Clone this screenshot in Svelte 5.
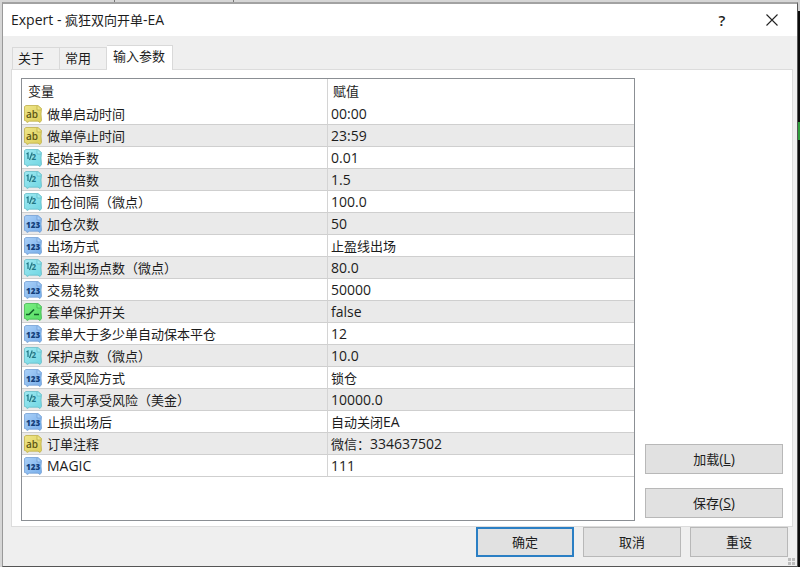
<script lang="ts">
  type Kind = "text" | "double" | "int" | "bool";

  const title = "Expert - 疯狂双向开单-EA";
  const tabs = ["关于", "常用", "输入参数"];
  let activeTab = $state(2);

  const params: { kind: Kind; name: string; value: string }[] = [
    { kind: "text", name: "做单启动时间", value: "00:00" },
    { kind: "text", name: "做单停止时间", value: "23:59" },
    { kind: "double", name: "起始手数", value: "0.01" },
    { kind: "double", name: "加仓倍数", value: "1.5" },
    { kind: "double", name: "加仓间隔（微点）", value: "100.0" },
    { kind: "int", name: "加仓次数", value: "50" },
    { kind: "int", name: "出场方式", value: "止盈线出场" },
    { kind: "double", name: "盈利出场点数（微点）", value: "80.0" },
    { kind: "int", name: "交易轮数", value: "50000" },
    { kind: "bool", name: "套单保护开关", value: "false" },
    { kind: "int", name: "套单大于多少单自动保本平仓", value: "12" },
    { kind: "double", name: "保护点数（微点）", value: "10.0" },
    { kind: "int", name: "承受风险方式", value: "锁仓" },
    { kind: "double", name: "最大可承受风险（美金）", value: "10000.0" },
    { kind: "int", name: "止损出场后", value: "自动关闭EA" },
    { kind: "text", name: "订单注释", value: "微信：334637502" },
    { kind: "int", name: "MAGIC", value: "111" },
  ];

  const colors = {
    text: { light: "#efe68a", dark: "#dccd58", edge: "#bfb04a", ink: "#5d5514" },
    double: { light: "#9fe9f2", dark: "#70d6e2", edge: "#66bcc8", ink: "#1f7584" },
    int: { light: "#a9d0f8", dark: "#78aeea", edge: "#749fd4", ink: "#143f7a" },
    bool: { light: "#7bf083", dark: "#55dc64", edge: "#44b552", ink: "#14622a" },
  };

  // latin runs are set a little larger than the chinese ones
  function runs(text: string) {
    return text.split(/([\x20-\x7e]+)/).filter((s) => s);
  }
</script>

{#snippet mixed(text: string)}
  {#each runs(text) as run}<span class:latin={/^[\x20-\x7e]/.test(run)}>{run}</span>{/each}
{/snippet}

{#snippet icon(kind: Kind)}
  {@const c = colors[kind]}
  <svg class="icon" viewBox="0 0 18 18" aria-hidden="true">
    <defs>
      <linearGradient id="fill-{kind}" x1="0" y1="0" x2="1" y2="1">
        <stop offset="0" stop-color={c.light} />
        <stop offset="1" stop-color={c.dark} />
      </linearGradient>
    </defs>
    <path
      d="M.5 1.500L2 .5H14L17.500 3.500L17 9L17.500 15.500L16 17.500L14 16.200H5.500L3 17.500L2.500 16L.5 15.500Z"
      fill="url(#fill-{kind})"
      stroke={c.edge}
      stroke-width=".8"
    />
    <path d="M13 1V5H17" fill={c.light} stroke={c.edge} stroke-width=".8" />
    {#if kind === "text"}
      <text x="2" y="12.500" font-size="10" font-weight="600" fill={c.ink}>ab</text>
    {:else if kind === "double"}
      <path d="M2.500 5L4 4V10M8.200 3.500L5.500 11" fill="none" stroke={c.ink} stroke-width="1.200" />
      <text x="7.500" y="11" font-size="8" font-weight="700" fill={c.ink}>2</text>
    {:else if kind === "int"}
      <text x="2" y="12.500" font-size="8" font-weight="800" fill={c.ink}>123</text>
    {:else}
      <path d="M2 11.500H5L10 6.500M10 11.500H15" fill="none" stroke={c.ink} stroke-width="1.700" />
    {/if}
  </svg>
{/snippet}

<div class="desktop">
  <div class="dialog" role="dialog" aria-labelledby="title">
    <header>
      <h1 id="title">{@render mixed(title)}</h1>
      <button class="caption help" aria-label="帮助">?</button>
      <button class="caption" aria-label="关闭">
        <svg viewBox="0 0 12 12" aria-hidden="true">
          <path d="M.5.500L11.500 11.500M11.500.5L.5 11.500" stroke="#222" stroke-width="1.100" />
        </svg>
      </button>
    </header>

    <main>
      <div class="tabs" role="tablist">
        {#each tabs as tab, i}
          <button
            class="tab"
            class:active={i === activeTab}
            role="tab"
            aria-selected={i === activeTab}
            onclick={() => (activeTab = i)}>{tab}</button
          >
        {/each}
      </div>

      <section class="panel">
        <div class="list">
          <table>
            <thead>
              <tr><th>变量</th><th>赋值</th></tr>
            </thead>
            <tbody>
              {#each params as p}
                <tr>
                  <td><div class="name">{@render icon(p.kind)}<div>{@render mixed(p.name)}</div></div></td>
                  <td>{@render mixed(p.value)}</td>
                </tr>
              {/each}
            </tbody>
          </table>
        </div>
        <div class="side">
          <button class="btn">加载<span class="latin">(<u>L</u>)</span></button>
          <button class="btn">保存<span class="latin">(<u>S</u>)</span></button>
        </div>
      </section>
    </main>

    <footer>
      <button class="btn default">确定</button>
      <button class="btn">取消</button>
      <button class="btn">重设</button>
      <svg class="grip" viewBox="0 0 7 7" aria-hidden="true">
        <path d="M0 0h3v3H0zM4 0h3v3H4zM0 4h3v3H0zM4 4h3v3H4z" fill="#bdbdbd" />
      </svg>
    </footer>
  </div>
</div>

<style>
  :global(body) {
    margin: 0;
  }

  .desktop,
  .desktop * {
    box-sizing: border-box;
  }

  .desktop {
    display: flex;
    min-height: 100vh;
    padding: 2px 2px 0;
    font-family: "Open Sans", "Noto Sans CJK SC", sans-serif;
    font-size: 13px;
    line-height: 20px;
    color: #1c1c1c;
    background:
      linear-gradient(#777, #777) 114px 0 / 1px 2px no-repeat,
      linear-gradient(#777, #777) 233px 0 / 1px 2px no-repeat,
      linear-gradient(#2f9e3c, #2f9e3c) right 122px / 2px 18px no-repeat,
      linear-gradient(#d0d0d0 11px, #0b0b0b 11px) right 0 / 2px 100% no-repeat,
      #d6d6d6;
  }

  .dialog {
    flex: 1;
    display: flex;
    flex-direction: column;
    border: 1px solid #555;
    border-top: 2px solid #a2a2a2;
    border-left-color: #999;
    background: #efefef;
  }

  button {
    font: inherit;
    color: inherit;
    padding: 0;
  }

  header {
    display: flex;
    height: 32px;
    background: #fff;
  }

  h1 {
    flex: 1;
    margin: 0;
    padding-left: 8px;
    font-size: 13px;
    font-weight: 400;
    line-height: 32px;
  }

  .caption {
    width: 50px;
    border: 0;
    background: none;
  }

  .caption svg {
    display: block;
    width: 12px;
    height: 12px;
    margin: 0 auto;
  }

  .help {
    font-size: 15px;
    font-weight: 600;
  }

  main {
    flex: 1;
    display: flex;
    flex-direction: column;
    padding: 9px 4px 0 8px;
  }

  .tabs {
    display: flex;
    align-items: flex-end;
    padding-left: 1px;
  }

  .tab {
    height: 22px;
    padding: 0 15px 2px 5px;
    border: 1px solid #d9d9d9;
    border-bottom: 0;
    background: #f0f0f0;
  }

  .tab + .tab {
    border-left: 0;
  }

  .tab.active {
    height: 25px;
    margin-bottom: -1px;
    padding: 0 7px 4px 6px;
    background: #fff;
    position: relative;
  }

  .panel {
    flex: 1;
    display: flex;
    gap: 10px;
    padding: 8px 9px 5px;
    border: 1px solid #dcdcdc;
    background: #fff;
  }

  .list {
    flex: 1;
    border: 1px solid #8b8f94;
  }

  table {
    width: 100%;
    table-layout: fixed;
    border-collapse: separate;
    border-spacing: 0;
  }

  th,
  td {
    height: 22px;
    padding: 0 3px;
    text-align: left;
    font-weight: 400;
    line-height: 20px;
    white-space: nowrap;
  }

  th {
    height: 24px;
    padding: 0 5px;
  }

  th:first-child {
    padding-left: 6px;
  }

  td {
    border-bottom: 1px solid #cfcfcf;
  }

  th:first-child,
  td:first-child {
    border-right: 1px solid #d4d4d4;
  }

  td:first-child {
    padding-left: 2px;
  }

  tbody tr:nth-child(even) {
    background: #eaeaea;
  }

  .name {
    display: flex;
    align-items: center;
    gap: 5px;
  }

  .icon {
    width: 18px;
    height: 18px;
  }

  .latin {
    font-size: 14px;
  }

  .side {
    display: flex;
    flex-direction: column;
    justify-content: flex-end;
    gap: 14px;
    width: 138px;
    padding-bottom: 3px;
  }

  .btn {
    height: 30px;
    border: 1px solid #b8b8b8;
    background: #e1e1e1;
  }

  .btn.default {
    border: 2px solid #2b7fc4;
  }

  footer {
    position: relative;
    display: flex;
    justify-content: flex-end;
    gap: 9px;
    padding: 0 9px 9px;
  }

  footer .btn {
    width: 98px;
  }

  .grip {
    position: absolute;
    right: 2px;
    bottom: 1px;
    width: 7px;
    height: 7px;
  }
</style>
